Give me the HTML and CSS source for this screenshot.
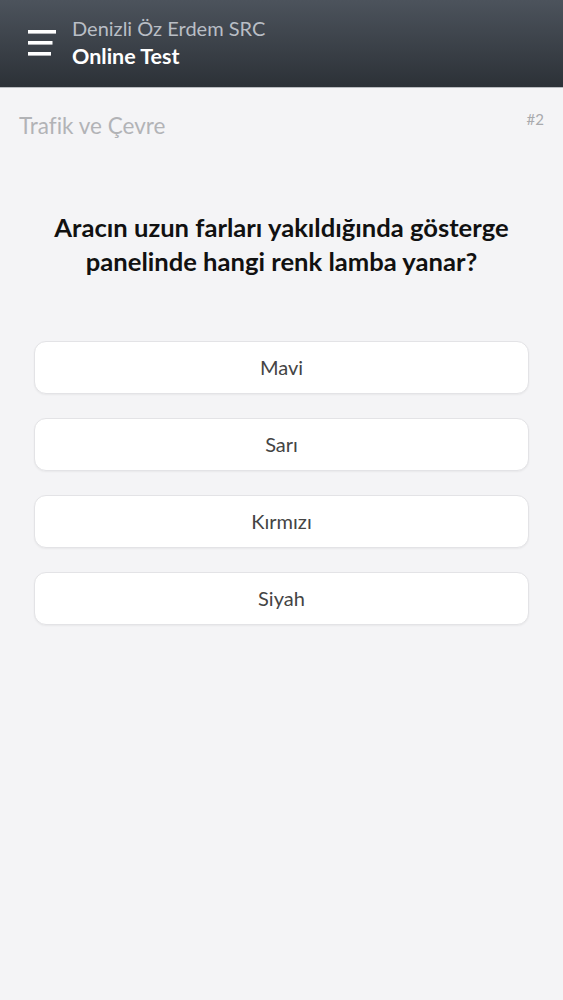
FILE: index.html
```html
<!DOCTYPE html>
<html lang="tr">
<head>
    <meta charset="UTF-8">
    <meta name="viewport" content="width=device-width, initial-scale=1.0">
    <title>Online Test</title>
    <link rel="stylesheet" href="styles.css">
</head>
<body>
    <header class="topbar">
        <svg class="menu-icon" width="28" height="26" viewBox="0 0 28 26">
            <rect x="0" y="0" width="28" height="3.6" fill="#fff"/>
            <rect x="0" y="11" width="24.5" height="3.6" fill="#fff"/>
            <rect x="0" y="22" width="23" height="3.6" fill="#fff"/>
        </svg>
        <div class="titles">
            <div class="subtitle">Denizli Öz Erdem SRC</div>
            <div class="title">Online Test</div>
        </div>
    </header>

    <main class="content">
        <div class="meta">
            <span class="category">Trafik ve Çevre</span>
            <span class="number">#2</span>
        </div>

        <h2 class="question">Aracın uzun farları yakıldığında gösterge panelinde hangi renk lamba yanar?</h2>

        <div class="options">
            <button class="option">Mavi</button>
            <button class="option">Sarı</button>
            <button class="option">Kırmızı</button>
            <button class="option">Siyah</button>
        </div>
    </main>
</body>
</html>
```

FILE: styles.css
```css
body {
    margin: 0;
    font-family: Lato, 'Open Sans', sans-serif;
    background-color: #f4f4f6;
    min-height: 1000px;
}
.topbar {
    height: 88px;
    box-sizing: border-box;
    display: flex;
    align-items: center;
    padding: 0 0 0 28px;
    background: linear-gradient(#4c535c, #2c3137);
    border-bottom: 1px solid #b9bcc0;
}
.menu-icon {
    margin-top: -2px;
    flex-shrink: 0;
}
.titles {
    margin-left: 16px;
    margin-top: -2px;
}
.subtitle {
    color: #b9bec5;
    font-size: 20px;
    line-height: 27px;
}
.title {
    color: #fff;
    font-size: 21.5px;
    font-weight: bold;
    line-height: 28px;
}
.content {
    padding: 0 34px;
}
.meta {
    display: flex;
    justify-content: space-between;
    align-items: flex-start;
    margin: 0 -15px 0 -15px;
    padding-top: 24px;
}
.category {
    color: #b2b3b6;
    font-size: 22.5px;
    line-height: 28px;
}
.number {
    color: #a9aaad;
    font-size: 15px;
    line-height: 20px;
    margin-top: -3px;
}
.question {
    margin: 70px 0 63px;
    text-align: center;
    font-size: 25.6px;
    line-height: 34px;
    font-weight: bold;
    color: #111;
}
.options {
    display: flex;
    flex-direction: column;
    gap: 24px;
}
.option {
    height: 53px;
    padding-bottom: 2px;
    background-color: #fff;
    border: 1.5px solid #e3e3e6;
    border-radius: 12px;
    box-shadow: 0 1px 2px rgba(0,0,0,0.05);
    font-family: inherit;
    font-size: 20px;
    color: #444;
    cursor: pointer;
}
```
